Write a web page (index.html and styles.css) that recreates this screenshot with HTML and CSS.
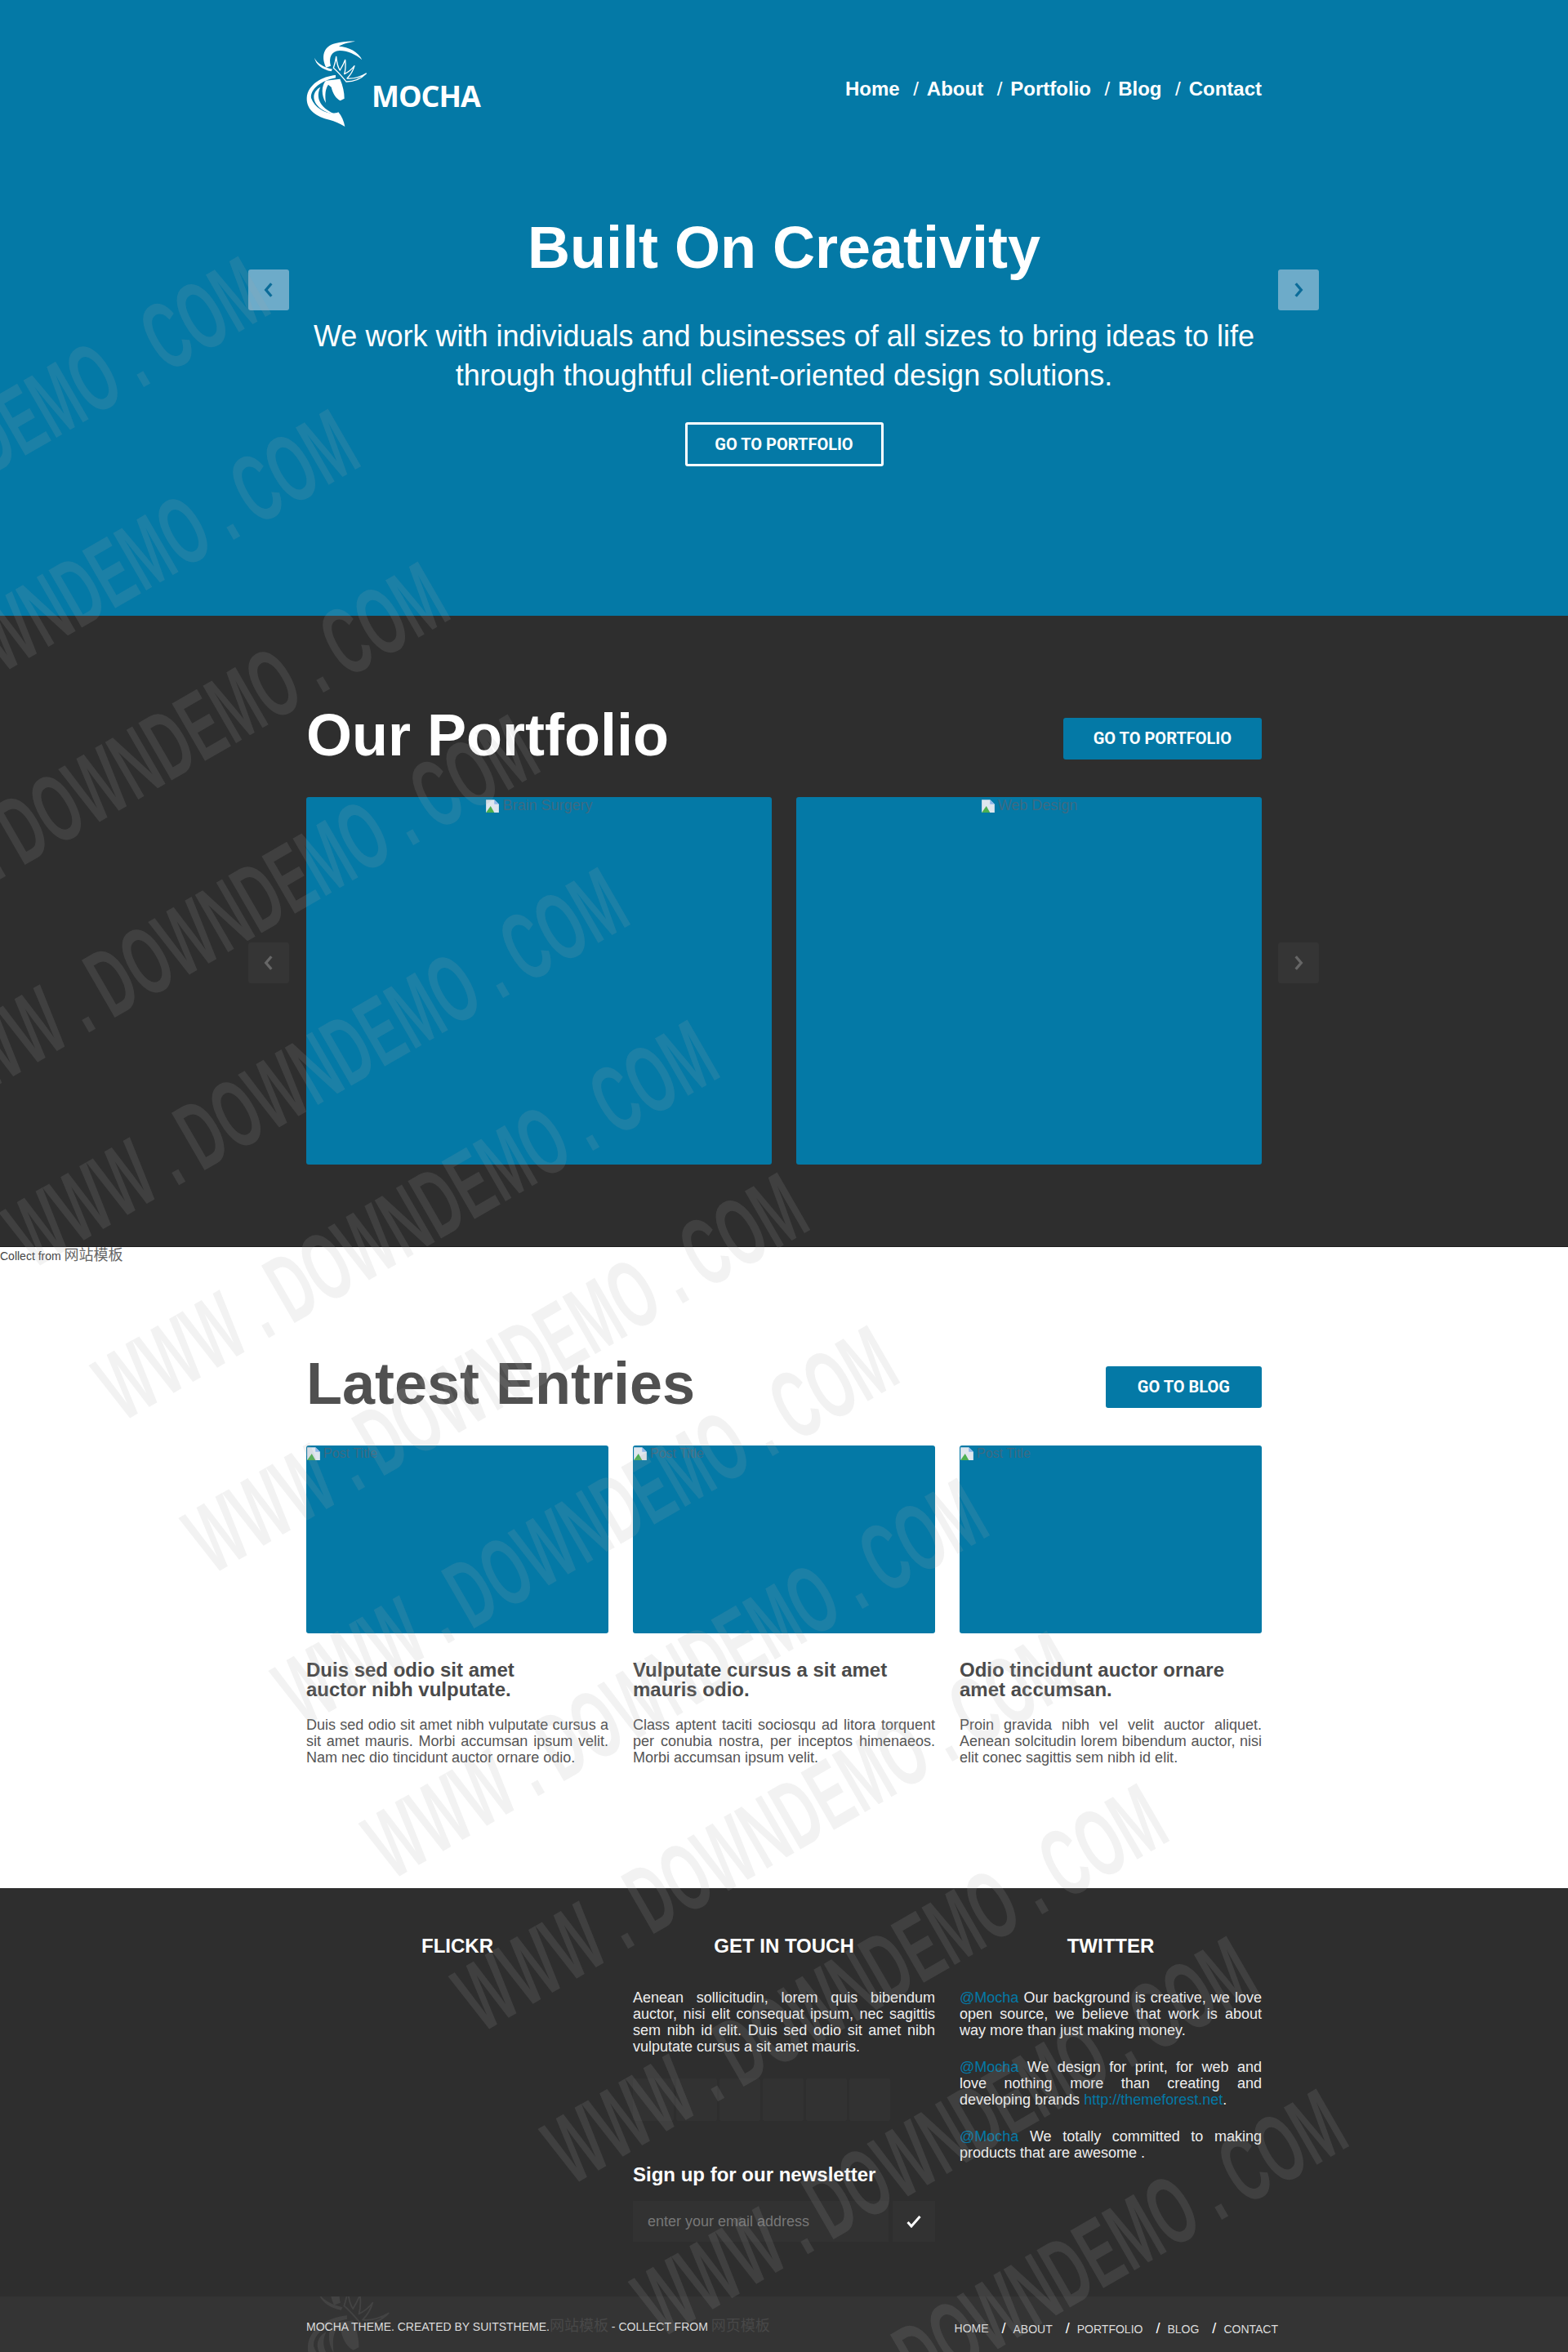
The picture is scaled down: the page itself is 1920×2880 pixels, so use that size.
FILE: index.html
```html
<!DOCTYPE html>
<html lang="en">
<head>
    <meta charset="UTF-8">
    <meta name="viewport" content="width=device-width, initial-scale=1.0">
    <title>Mocha Theme</title>
    <link rel="stylesheet" href="styles.css">
</head>
<body>
    <svg class="defs" width="0" height="0">
        <symbol id="deer" viewBox="0 0 225 315">
            <path d="M73 98C55 62 60 20 108 9C130 3 160 0 180 2C152 6 132 12 120 20C155 22 192 40 205 70C180 48 148 35 122 36C92 38 82 62 90 92Z"/>
            <path d="M30 62C40 82 62 96 96 104L92 112C60 105 35 88 30 62Z"/>
            <path d="M100 100C105 85 108 72 110 58C112 80 115 95 124 108C132 95 138 83 143 70C145 88 145 105 140 122C155 115 167 105 177 92C172 110 160 128 150 138C175 140 200 132 220 120C200 140 175 150 147 150C130 130 115 112 100 100Z" fill="none" stroke="#fff" stroke-width="4" stroke-linejoin="round"/>
            <path d="M108 126C60 130 5 160 2 210C0 255 40 280 85 290C105 295 125 305 142 315C138 295 130 276 118 262C90 276 34 255 18 210C14 178 55 146 108 136Z"/>
            <path d="M52 170C34 205 48 245 104 268C74 268 26 240 28 204C29 190 38 177 52 170Z"/>
            <path d="M72 146L124 140C135 165 140 190 140 212L125 220C110 212 98 195 92 170L81 161C71 175 68 195 72 228C55 200 55 165 72 146Z"/>
        </symbol>
        <symbol id="broken" viewBox="0 0 16 16">
            <path d="M1 1H10L15 6V15H1Z" fill="#dfe6ee"/>
            <path d="M1 15L6 8L10 15Z" fill="#4caf50"/>
            <path d="M10 1L15 6H10Z" fill="#8fb6e8"/>
        </symbol>
    </svg>

    <header class="hero">
        <div class="container">
            <div class="topbar">
                <a class="logo">
                    <svg class="logo-mark"><use href="#deer"/></svg>
                    <span class="logo-text">MOCHA</span>
                </a>
                <ul class="nav">
                    <li>Home</li>
                    <li>About</li>
                    <li>Portfolio</li>
                    <li>Blog</li>
                    <li>Contact</li>
                </ul>
            </div>
            <div class="slider">
                <span class="arrow arrow-left arrow-light">
                    <svg viewBox="0 0 12 20"><polyline points="9,3 3,10 9,17"/></svg>
                </span>
                <span class="arrow arrow-right arrow-light">
                    <svg viewBox="0 0 12 20"><polyline points="3,3 9,10 3,17"/></svg>
                </span>
                <h1>Built On Creativity</h1>
                <p>We work with individuals and businesses of all sizes to bring ideas to life<br>through thoughtful client-oriented design solutions.</p>
                <a class="btn btn-outline">Go to portfolio</a>
            </div>
        </div>
    </header>

    <section class="portfolio">
        <div class="container">
            <div class="section-head">
                <h2>Our Portfolio</h2>
                <a class="btn btn-solid">Go to portfolio</a>
            </div>
            <div class="slider">
                <span class="arrow arrow-left arrow-dark">
                    <svg viewBox="0 0 12 20"><polyline points="9,3 3,10 9,17"/></svg>
                </span>
                <span class="arrow arrow-right arrow-dark">
                    <svg viewBox="0 0 12 20"><polyline points="3,3 9,10 3,17"/></svg>
                </span>
                <div class="work-grid">
                    <div class="thumb thumb-work"><svg class="broken"><use href="#broken"/></svg>Brain Surgery</div>
                    <div class="thumb thumb-work"><svg class="broken"><use href="#broken"/></svg>Web Design</div>
                </div>
            </div>
        </div>
    </section>

    <section class="entries">
        <div class="collect">Collect from <span class="collect-link">网站模板</span></div>
        <div class="container">
            <div class="section-head">
                <h2>Latest Entries</h2>
                <a class="btn btn-solid">Go to blog</a>
            </div>
            <div class="post-grid">
                <article>
                    <div class="thumb thumb-post"><svg class="broken"><use href="#broken"/></svg>Post Title</div>
                    <h3>Duis sed odio sit amet<br>auctor nibh vulputate.</h3>
                    <p>Duis sed odio sit amet nibh vulputate cursus a sit amet mauris. Morbi accumsan ipsum velit. Nam nec dio tincidunt auctor ornare odio.</p>
                </article>
                <article>
                    <div class="thumb thumb-post"><svg class="broken"><use href="#broken"/></svg>Post Title</div>
                    <h3>Vulputate cursus a sit amet<br>mauris odio.</h3>
                    <p>Class aptent taciti sociosqu ad litora torquent per conubia nostra, per inceptos himenaeos. Morbi accumsan ipsum velit.</p>
                </article>
                <article>
                    <div class="thumb thumb-post"><svg class="broken"><use href="#broken"/></svg>Post Title</div>
                    <h3>Odio tincidunt auctor ornare<br>amet accumsan.</h3>
                    <p>Proin gravida nibh vel velit auctor aliquet. Aenean solcitudin lorem bibendum auctor, nisi elit conec sagittis sem nibh id elit.</p>
                </article>
            </div>
        </div>
    </section>

    <footer class="footer">
        <div class="container footer-grid">
            <div class="footer-col">
                <h4>FLICKR</h4>
            </div>
            <div class="footer-col">
                <h4>GET IN TOUCH</h4>
                <p>Aenean sollicitudin, lorem quis bibendum auctor, nisi elit consequat ipsum, nec sagittis sem nibh id elit. Duis sed odio sit amet nibh vulputate cursus a sit amet mauris.</p>
                <div class="social">
                    <span></span><span></span><span></span><span></span><span></span><span></span>
                </div>
                <h5>Sign up for our newsletter</h5>
                <form class="newsletter">
                    <div class="email">enter your email address</div>
                    <div class="submit">
                        <svg viewBox="0 0 18 16"><path d="M1.5 9L6 14L16.5 2"/></svg>
                    </div>
                </form>
            </div>
            <div class="footer-col">
                <h4>TWITTER</h4>
                <p><a>@Mocha</a> Our background is creative, we love open source, we believe that work is about way more than just making money.</p>
                <p><a>@Mocha</a> We design for print, for web and love nothing more than creating and developing brands <a>http://themeforest.net</a>.</p>
                <p><a>@Mocha</a> We totally committed to making products that are awesome .</p>
            </div>
        </div>
    </footer>

    <div class="bottom">
        <svg class="bottom-logo"><use href="#deer"/></svg>
        <div class="container bottom-row">
            <div class="copy">MOCHA THEME. CREATED BY SUITSTHEME.<span class="faint">网站模板</span> - COLLECT FROM <span class="faint">网页模板</span></div>
            <ul class="bottom-nav">
                <li>HOME</li>
                <li>ABOUT</li>
                <li>PORTFOLIO</li>
                <li>BLOG</li>
                <li>CONTACT</li>
            </ul>
        </div>
    </div>

    <!-- demo site watermark, lies over the whole page -->
    <div class="watermark">
        <span style="--k:-7">WWW . DOWNDEMO . COM</span>
        <span style="--k:-6">WWW . DOWNDEMO . COM</span>
        <span style="--k:-5">WWW . DOWNDEMO . COM</span>
        <span style="--k:-4">WWW . DOWNDEMO . COM</span>
        <span style="--k:-3">WWW . DOWNDEMO . COM</span>
        <span style="--k:-2">WWW . DOWNDEMO . COM</span>
        <span style="--k:-1">WWW . DOWNDEMO . COM</span>
        <span style="--k:0">WWW . DOWNDEMO . COM</span>
        <span style="--k:1">WWW . DOWNDEMO . COM</span>
        <span style="--k:2">WWW . DOWNDEMO . COM</span>
        <span style="--k:3">WWW . DOWNDEMO . COM</span>
        <span style="--k:4">WWW . DOWNDEMO . COM</span>
        <span style="--k:5">WWW . DOWNDEMO . COM</span>
    </div>
</body>
</html>
```

FILE: styles.css
```css
* {
    box-sizing: border-box;
}
body {
    position: relative;
    margin: 0;
    height: 2880px;
    overflow: hidden;
    font-family: "Liberation Sans", Arial, sans-serif;
    font-size: 18px;
    line-height: 20px;
    color: #555;
    background-color: #fff;
}
ul {
    list-style: none;
    margin: 0;
    padding: 0;
}
h1, h2, h3, h4, h5, p {
    margin: 0;
}
.defs {
    position: absolute;
}
.container {
    width: 1170px;
    margin: 0 auto;
}

/* hero */
.hero {
    height: 754px;
    padding-top: 50px;
    background-color: #0479a6;
    color: #fff;
}
.topbar {
    display: flex;
    justify-content: space-between;
}
.logo {
    display: flex;
    align-items: flex-end;
    height: 105px;
}
.logo-mark {
    width: 75px;
    height: 105px;
    fill: #fff;
}
.logo-text {
    margin: 0 0 17px 5px;
    font-family: "Open Sans", sans-serif;
    font-size: 36px;
    line-height: 40px;
    font-weight: 700;
    letter-spacing: -1px;
}
.nav {
    display: flex;
    margin-top: 44px;
    font-size: 24px;
    line-height: 30px;
    font-weight: 700;
}
.nav li + li::before {
    content: "/";
    margin: 0 10px 0 16.5px;
    font-weight: 400;
}
.slider {
    position: relative;
}
.hero .slider {
    margin-top: 109px;
    text-align: center;
}
.hero h1 {
    font-size: 72px;
    line-height: 79px;
    font-weight: 700;
}
.hero p {
    margin: 45px 0 33px;
    font-size: 36px;
    line-height: 48px;
}
.arrow {
    position: absolute;
    display: flex;
    align-items: center;
    justify-content: center;
    width: 50px;
    height: 50px;
    border-radius: 3px;
}
.arrow svg {
    width: 14px;
    height: 22px;
    fill: none;
    stroke-width: 3;
}
.arrow-left {
    left: -71px;
}
.arrow-right {
    right: -70px;
}
.arrow-light {
    top: 66px;
    background-color: #6dabc9;
}
.arrow-light svg {
    stroke: #0b6c99;
}
.arrow-dark {
    top: 178px;
    background-color: #353535;
}
.arrow-dark svg {
    stroke: #666;
}
.btn {
    display: inline-block;
    border-radius: 3px;
    font-family: Roboto, sans-serif;
    font-size: 20px;
    font-weight: 700;
    text-align: center;
    text-transform: uppercase;
    color: #fff;
}
.btn-outline {
    width: 243px;
    height: 54px;
    border: 3px solid #fff;
    line-height: 48px;
}
.btn-solid {
    margin-top: 18px;
    padding: 0 37px;
    height: 51px;
    line-height: 51px;
    background-color: #0479a6;
}

/* portfolio */
.portfolio {
    height: 773px;
    padding-top: 107px;
    border-bottom: 1px solid #1c1c1c;
    background-color: #2e2e2e;
}
.section-head {
    display: flex;
    justify-content: space-between;
    align-items: flex-start;
    margin-bottom: 36px;
}
.section-head h2 {
    font-size: 72px;
    line-height: 79px;
    font-weight: 700;
}
.portfolio h2 {
    color: #fff;
}
.work-grid {
    display: grid;
    grid-template-columns: 570px 570px;
    gap: 30px;
}
.thumb {
    border-radius: 3px;
    background-color: #0479a6;
    color: #3d6a83;
}
.thumb-work {
    height: 450px;
    text-align: center;
}
.thumb-post {
    height: 230px;
    font-size: 16px;
}
.broken {
    width: 18px;
    height: 18px;
    margin-right: 3px;
    vertical-align: -4px;
}

/* latest entries */
.entries {
    height: 785px;
}
.entries .btn-solid {
    padding: 0 39px;
}
.collect {
    height: 128px;
    font-size: 14px;
    line-height: 20px;
    color: #444;
}
.collect-link {
    font-family: "Liberation Sans", "Noto Sans CJK SC", sans-serif;
    font-size: 18px;
    color: #666;
}
.entries h2 {
    color: #505050;
}
.post-grid {
    display: grid;
    grid-template-columns: repeat(3, 370px);
    gap: 30px;
}
.post-grid h3 {
    margin: 33px 0 21px;
    font-size: 24px;
    line-height: 24px;
    font-weight: 700;
    color: #4a4a4a;
}
.post-grid p {
    text-align: justify;
}

/* footer */
.footer {
    height: 500px;
    padding-top: 56px;
    background-color: #2e2e2e;
    color: #eee;
}
.footer-grid {
    display: grid;
    grid-template-columns: repeat(3, 370px);
    gap: 30px;
}
.footer h4 {
    margin-bottom: 38px;
    font-size: 24px;
    line-height: 30px;
    font-weight: 700;
    text-align: center;
    color: #fff;
}
.footer p {
    margin-bottom: 25px;
    text-align: justify;
}
.footer a {
    color: #0479a6;
}
.social {
    display: flex;
    gap: 3px;
    margin-top: 29px;
}
.social span {
    width: 50px;
    height: 52px;
    border-radius: 2px;
    background-color: #323232;
}
.footer h5 {
    margin: 54px 0 20px;
    font-size: 24px;
    line-height: 24px;
    font-weight: 700;
    color: #fff;
}
.newsletter {
    display: flex;
    gap: 5px;
    height: 50px;
}
.email {
    flex: 1;
    padding-left: 18px;
    line-height: 50px;
    color: #777;
    background-color: #323232;
}
.submit {
    display: flex;
    align-items: center;
    justify-content: center;
    width: 52px;
    background-color: #323232;
}
.submit svg {
    width: 18px;
    height: 16px;
    fill: none;
    stroke: #fff;
    stroke-width: 3;
}

/* bottom bar */
.bottom {
    position: relative;
    height: 68px;
    overflow: hidden;
    background-color: #343434;
    color: #ddd;
}
.bottom-logo {
    position: absolute;
    left: 376px;
    top: -34px;
    width: 102px;
    height: 143px;
    fill: #fff;
    opacity: 0.07;
}
.bottom-row {
    position: relative;
    display: flex;
    justify-content: space-between;
    padding-top: 26px;
    font-size: 14px;
}
.faint {
    font-family: "Liberation Sans", "Noto Sans CJK SC", sans-serif;
    font-size: 18px;
    color: #484848;
}
.bottom-nav {
    display: flex;
    margin: 3px -20px 0 0;
}
.bottom-nav li + li::before {
    content: "/";
    margin: 0 9px 0 16px;
    font-size: 18px;
    color: #fff;
}

/* watermark */
.watermark {
    position: absolute;
    inset: 0;
    overflow: hidden;
    pointer-events: none;
}
.watermark span {
    position: absolute;
    left: calc(717px + 110px * var(--k));
    top: calc(1868px + 187px * var(--k));
    font-size: 118px;
    line-height: 118px;
    font-weight: 700;
    white-space: nowrap;
    color: rgba(170, 170, 170, 0.15);
    transform: translate(-50%, -50%) rotate(-30deg) scaleX(0.555);
}
```
